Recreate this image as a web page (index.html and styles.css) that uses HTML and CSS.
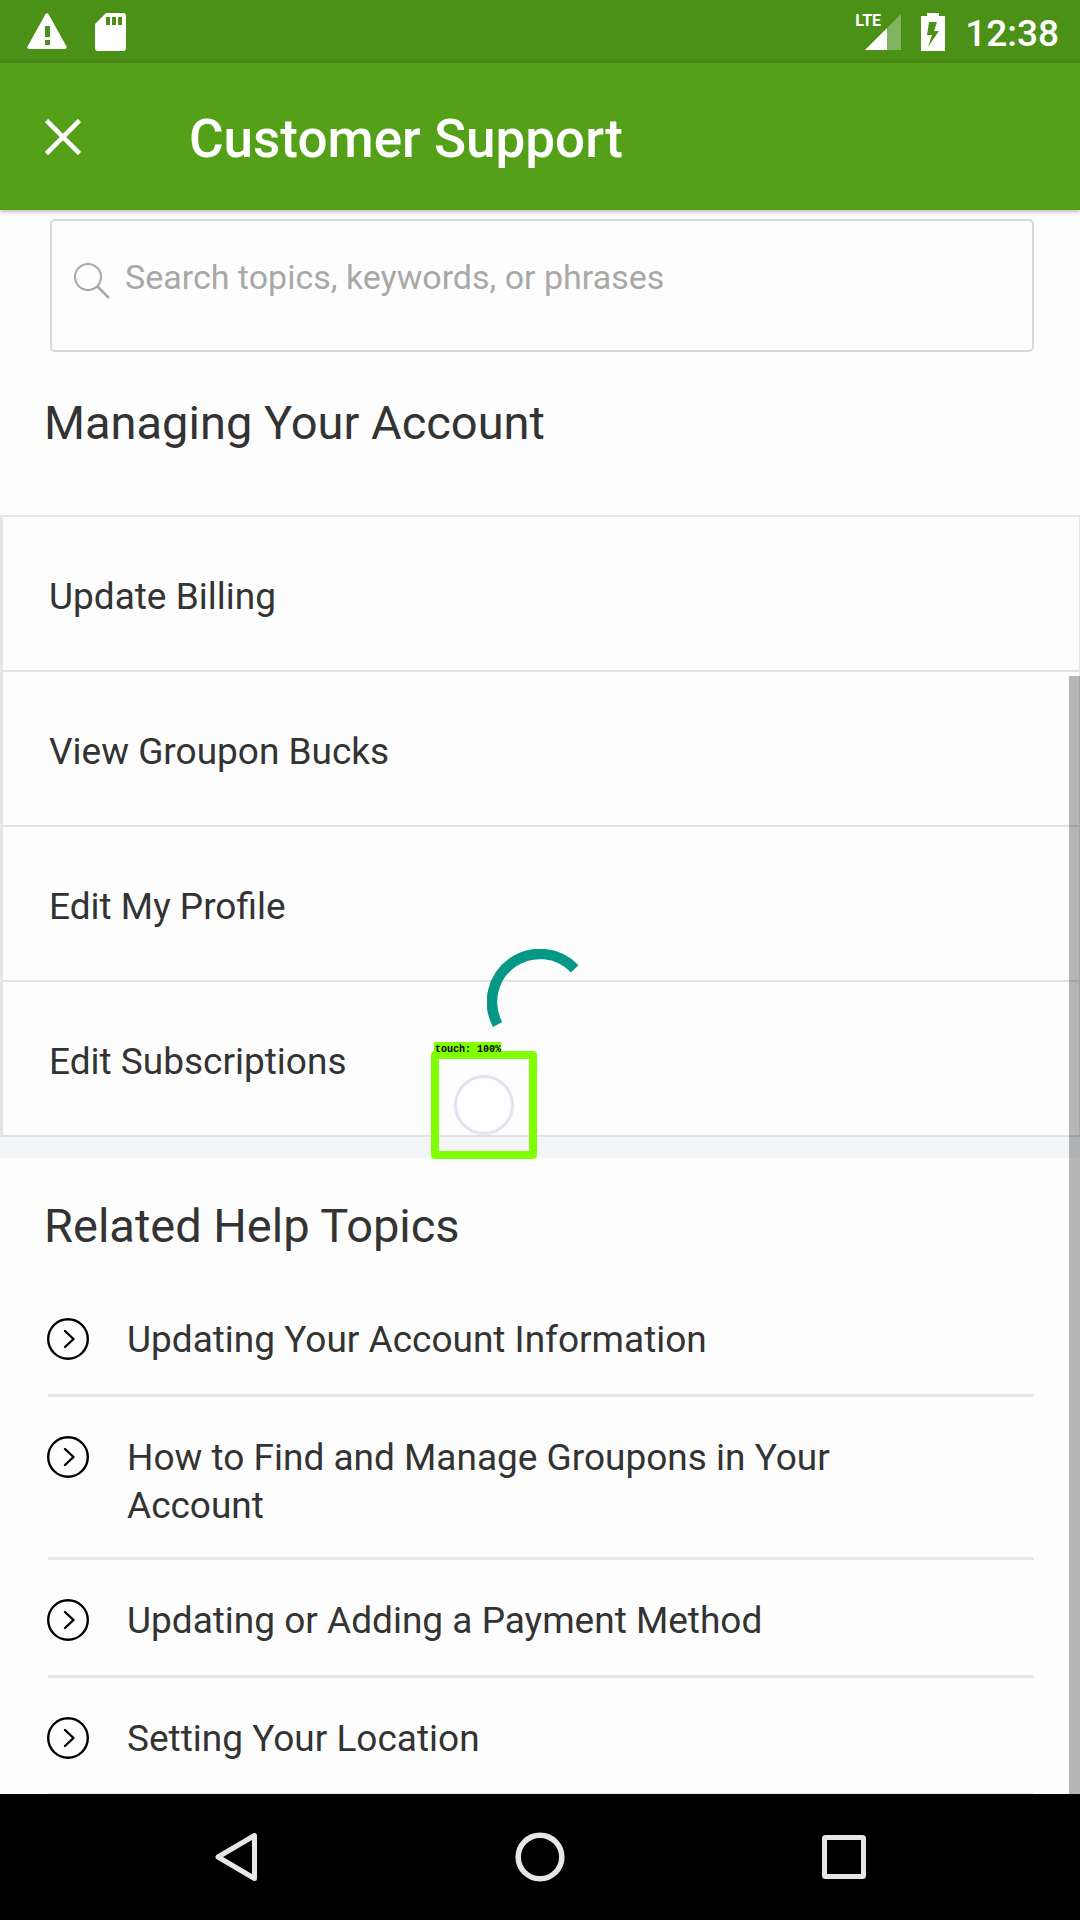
FILE: index.html
```html
<!DOCTYPE html>
<html lang="en">
<head>
<meta charset="utf-8">
<meta name="viewport" content="width=device-width, initial-scale=1">
<title>Customer Support</title>
<link rel="stylesheet" href="styles.css">
</head>
<body>
<svg class="defs" aria-hidden="true">
  <symbol id="chevron" viewBox="0 0 42 42">
    <circle cx="21" cy="21" r="19.800" fill="none" stroke="#000" stroke-width="2.400"/>
    <path d="M18 13l8.500 8-8.500 8" fill="none" stroke="#000" stroke-width="2.400" stroke-linecap="round" stroke-linejoin="round"/>
  </symbol>
</svg>
<div class="status">
  <div class="status-group status-left">
    <svg width="40" height="38" viewBox="0 0 40 38" aria-hidden="true"><path fill="#fff" fill-rule="evenodd" d="M18.300 1.500q1.700-2.500 3.400 0L39.500 33.500q.8 2.500-1.500 2.500H2q-2.300 0-1.500-2.500ZM18 13v11h5V13ZM18 27v5h5v-5Z"/></svg>
    <svg width="31" height="38" viewBox="0 0 31 38" aria-hidden="true"><path fill="#fff" fill-rule="evenodd" d="M11 0h17a3 3 0 0 1 3 3v32a3 3 0 0 1-3 3H3a3 3 0 0 1-3-3V11ZM11 4v8h4V4ZM17 4v8h4V4ZM23 4v8h4V4Z"/></svg>
  </div>
  <div class="status-group status-right">
    <span class="signal">
      <svg width="36" height="36" viewBox="0 0 36 36" aria-hidden="true"><path fill="#82b45f" d="M36 0v36H22V14Z"/><path fill="#fff" d="M22 14v22H0Z"/></svg>
      <span class="lte">LTE</span>
    </span>
    <svg width="24" height="38" viewBox="0 0 24 38" aria-hidden="true"><path fill="#fff" fill-rule="evenodd" d="M6 0h12v3h6v35H0V3h6ZM8 9 6 22h5L7 34 18 18h-5l3-9Z"/></svg>
    <span class="clock">12:38</span>
  </div>
</div>
<header class="appbar">
  <button class="close" type="button" aria-label="Close"><svg width="36" height="36" viewBox="0 0 36 36"><path d="M1.500 1.500l33 33M34.500 1.500l-33 33" stroke="#fff" stroke-width="4.600"/></svg></button>
  <h1 class="title">Customer Support</h1>
</header>
<div class="stage">
  <main class="content">
    <label class="search">
      <svg width="36" height="36" viewBox="0 0 36 36" aria-hidden="true"><circle cx="14" cy="14" r="13" fill="none" stroke="#aaa" stroke-width="2.200"/><path d="M23.500 23.500 35 35" stroke="#aaa" stroke-width="2.600"/></svg>
      <input class="search-input" type="search" placeholder="Search topics, keywords, or phrases" aria-label="Search topics">
    </label>
    <section>
      <h2 class="heading heading-account">Managing Your Account</h2>
      <ul class="rows">
        <li><a class="row" href="#billing">Update Billing</a></li>
        <li><a class="row" href="#bucks">View Groupon Bucks</a></li>
        <li><a class="row" href="#profile">Edit My Profile</a></li>
        <li><a class="row" href="#subscriptions">Edit Subscriptions</a></li>
      </ul>
    </section>
    <section class="related">
      <h2 class="heading heading-related">Related Help Topics</h2>
      <ul class="topics">
        <li><a class="topic" href="#information"><svg class="chevron" aria-hidden="true"><use href="#chevron"/></svg><span>Updating Your Account Information</span></a></li>
        <li><a class="topic" href="#groupons"><svg class="chevron" aria-hidden="true"><use href="#chevron"/></svg><span>How to Find and Manage Groupons in Your Account</span></a></li>
        <li><a class="topic" href="#payment"><svg class="chevron" aria-hidden="true"><use href="#chevron"/></svg><span>Updating or Adding a Payment Method</span></a></li>
        <li><a class="topic" href="#location"><svg class="chevron" aria-hidden="true"><use href="#chevron"/></svg><span>Setting Your Location</span></a></li>
      </ul>
    </section>
  </main>
  <div class="scroll-thumb"></div>
  <div class="loading" role="status" aria-label="Loading">
    <svg width="106" height="106" viewBox="0 0 106 106"><path d="M10.600 75.500A48 48 0 0 1 87.700 19.800" fill="none" stroke="#069886" stroke-width="10.500"/></svg>
  </div>
  <div class="touch">
    <span class="touch-label">touch: 100%</span>
    <span class="touch-dot"></span>
  </div>
</div>
<nav class="navbar" aria-label="System">
  <button class="nav-button" type="button" aria-label="Back"><svg width="50" height="50" viewBox="0 0 50 50"><path d="M43.500 3.500v43L7 25Z" fill="none" stroke="#e6e6e6" stroke-width="5" stroke-linejoin="round"/></svg></button>
  <button class="nav-button" type="button" aria-label="Home"><svg width="50" height="50" viewBox="0 0 50 50"><circle cx="25" cy="25" r="21.800" fill="none" stroke="#e6e6e6" stroke-width="5.500"/></svg></button>
  <button class="nav-button" type="button" aria-label="Recent apps"><svg width="50" height="50" viewBox="0 0 50 50"><rect x="5.500" y="5.500" width="39" height="39" rx="1" fill="none" stroke="#e6e6e6" stroke-width="5" stroke-linejoin="round"/></svg></button>
</nav>
</body>
</html>
```
FILE: styles.css
```css
* {
  box-sizing: border-box;
}

body {
  margin: 0;
  height: 100vh;
  display: flex;
  flex-direction: column;
  background: #fdfdfd;
  color: #333;
  font-family: Roboto, sans-serif;
  font-size: 37px;
  line-height: 48px;
}

svg {
  display: block;
  flex: none;
}

.defs {
  position: absolute;
  width: 0;
  height: 0;
}

h1,
h2,
ul {
  margin: 0;
  padding: 0;
  font-weight: 400;
}

ul {
  list-style: none;
}

a {
  color: inherit;
  text-decoration: none;
}

button {
  display: flex;
  align-items: center;
  justify-content: center;
  padding: 0;
  border: 0;
  background: none;
}

/* System status bar */
.status {
  flex: none;
  display: flex;
  justify-content: space-between;
  height: 63px;
  padding: 0 21px 0 27px;
  background: #4b9017;
  color: #fff;
}

.status-group {
  display: flex;
  align-items: center;
}

.status-left {
  gap: 28px;
}

.status-right {
  gap: 20px;
}

.signal {
  position: relative;
}

.lte {
  position: absolute;
  right: 20px;
  top: -3px;
  font-family: "Liberation Sans Narrow", Roboto, sans-serif;
  font-size: 16px;
  font-weight: 700;
  line-height: 20px;
}

.clock {
  padding-top: 4px;
  font-size: 37px;
  font-weight: 500;
}

/* App bar */
.appbar {
  position: relative;
  z-index: 1;
  flex: none;
  display: flex;
  align-items: center;
  height: 147px;
  background: #54a119;
  color: #fff;
  box-shadow: 0 1px 5px rgba(60, 30, 30, 0.4);
}

.close {
  width: 126px;
  height: 126px;
}

.title {
  padding: 4px 0 0 63px;
  font-size: 53px;
  font-weight: 500;
  line-height: 60px;
}

/* Scrolling page */
.stage {
  position: relative;
  flex: 1;
  min-height: 0;
}

.content {
  height: 100%;
  overflow-y: auto;
  scrollbar-width: none;
}

.search {
  display: flex;
  align-items: flex-start;
  gap: 15px;
  margin: 9px 46px 0 50px;
  padding: 32px 22px 49px;
  border: 2px solid #d9d9d9;
  border-radius: 5px;
}

.search svg {
  margin-top: 10px;
}

.search-input {
  flex: 1;
  min-width: 0;
  height: 48px;
  padding: 0;
  border: 0;
  outline: 0;
  background: none;
  color: inherit;
  font: 34px/48px Roboto, sans-serif;
}

.search-input::placeholder {
  color: #a8a8a8;
  opacity: 1;
}

.heading {
  padding: 0 44px;
  font-size: 47px;
  line-height: 60px;
}

.heading-account {
  padding-top: 41px;
  padding-bottom: 62px;
}

.rows {
  border: 2px solid #e6e4e5;
  border-bottom: 0;
  border-left-width: 3px;
  border-right-width: 1px;
}

.row {
  display: block;
  padding: 56px 46px 49px;
  border-bottom: 2px solid #e2e2e2;
}

.related {
  border-top: 21px solid #f4f5f7;
}

.heading-related {
  padding-top: 38px;
  padding-bottom: 23px;
}

.topics {
  margin: 0 46px 0 48px;
}

.topic {
  display: flex;
  align-items: flex-start;
  gap: 38px;
  min-height: 118px;
  padding: 37px 120px 27px 0;
  border-bottom: 3px solid #e7e7e7;
}

.chevron {
  width: 42px;
  height: 42px;
  margin: 2px 0 0 -1px;
}

/* Layers over the page */
.scroll-thumb {
  position: absolute;
  right: 0;
  bottom: 0;
  width: 11px;
  height: 1118px;
  background: rgba(0, 0, 0, 0.28);
}

.loading {
  position: absolute;
  inset: 0;
  display: flex;
  align-items: center;
  justify-content: center;
  pointer-events: none;
}

.touch {
  position: absolute;
  left: 431px;
  top: 841px;
  display: flex;
  align-items: center;
  justify-content: center;
  width: 106px;
  height: 108px;
  border: 8px solid #80ff00;
  border-radius: 4px;
  pointer-events: none;
}

.touch-label {
  position: absolute;
  left: -5px;
  top: -17px;
  padding: 1px 0 0 1px;
  background: #80ff00;
  color: #000;
  font-family: "Liberation Mono", monospace;
  font-size: 10px;
  font-weight: 700;
  line-height: 13px;
  white-space: nowrap;
}

.touch-dot {
  width: 60px;
  height: 60px;
  border: 3px solid #e4e2f0;
  border-radius: 50%;
  background: rgba(255, 255, 255, 0.5);
}

/* System navigation */
.navbar {
  flex: none;
  display: flex;
  justify-content: center;
  height: 126px;
  background: #000;
}

.nav-button {
  width: 304px;
}
```
